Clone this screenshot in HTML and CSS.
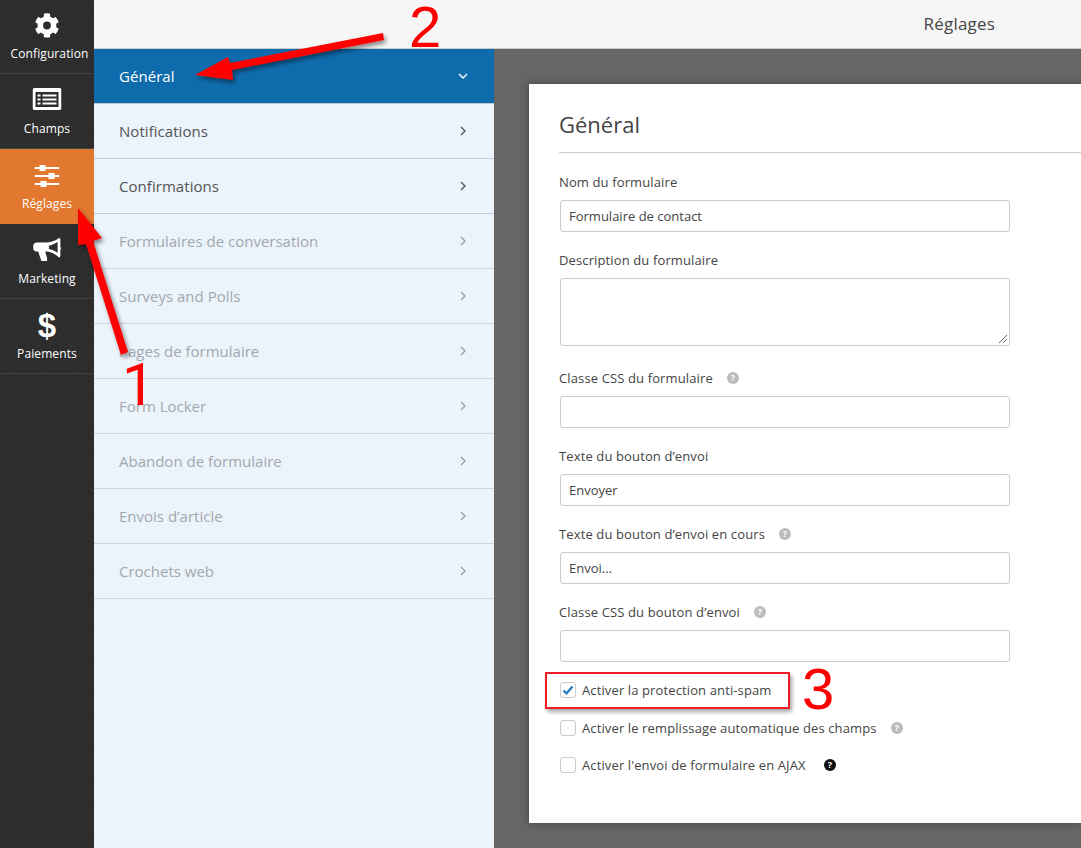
FILE: index.html
```html
<!DOCTYPE html>
<html lang="fr">
<head>
<meta charset="utf-8">
<title>Réglages</title>
<link rel="stylesheet" href="styles.css">
</head>
<body>
<div class="app">
  <nav class="rail">
    <a class="rail-item rail-item-first">
      <svg class="rail-icon" viewBox="0 0 512 512" width="25" height="25"><path fill="#fff" d="M487 315l-43-25c4-23 4-46 0-69l43-25c5-3 7-9 6-14-11-36-30-68-55-95-4-4-10-5-15-2l-43 25c-18-15-39-27-60-35V25c0-6-4-11-10-12-37-8-75-8-110 0-6 1-10 6-10 12v50c-22 8-42 20-60 35L87 85c-5-3-11-2-15 2-25 27-44 59-55 95-2 6 1 11 6 14l43 25c-4 23-4 46 0 69l-43 25c-5 3-7 9-6 14 11 36 30 68 55 95 4 4 10 5 15 2l43-25c18 15 39 27 60 35v50c0 6 4 11 10 12 37 8 75 8 110 0 6-1 10-6 10-12v-50c22-8 42-20 60-35l43 25c5 3 11 2 15-2 25-27 44-59 55-95 1-6-1-11-6-14zM256 336a80 80 0 1 1 0-160 80 80 0 0 1 0 160z"/></svg>
      <span>Configuration</span>
    </a>
    <a class="rail-item">
      <svg class="rail-icon" viewBox="0 0 29 22" width="29" height="22"><path fill="#fff" fill-rule="evenodd" d="M2 0h25a2 2 0 0 1 2 2v18a2 2 0 0 1-2 2H2a2 2 0 0 1-2-2V2a2 2 0 0 1 2-2zm1 4v15h23V4z"/><path fill="#fff" d="M5 6.500h3v2H5zM10 6.500h14v2H10zM5 10.500h3v2H5zM10 10.500h14v2H10zM5 14.500h3v2H5zM10 14.500h14v2H10z"/></svg>
      <span>Champs</span>
    </a>
    <a class="rail-item rail-item-active">
      <svg class="rail-icon" viewBox="0 0 25 22" width="25" height="22"><path fill="#fff" d="M0 2h25v2H0zM0 10h25v2H0zM0 18h25v2H0z"/><path fill="#fff" d="M5 0h6v6H5zM14 8h6v6h-6zM6 16h6v6H6z"/></svg>
      <span>Réglages</span>
    </a>
    <a class="rail-item">
      <svg class="rail-icon" viewBox="0 0 30 26" width="29" height="24"><path fill="#fff" fill-rule="evenodd" d="M28 0c1 0 1.500 1 1.500 2v7.500c.4.500.5 1 .5 1.500s-.1 1-.5 1.500V19c0 1-.6 2-1.500 2-4-3.500-9-6-13-6.300h-2l1.800 6c.4 1.500.5 3 .1 4.300H9c-.5-1.300-2.200-6-3.500-10.300H4c-2.200 0-4-1.800-4-4V9c0-2.200 1.800-4 4-4h10c5 0 10-2 14-5zm-1.500 4.300C23.500 6.300 20 7.800 17 8.300v3.600c3 .5 6.500 2 9.500 4z"/></svg>
      <span>Marketing</span>
    </a>
    <a class="rail-item">
      <span class="rail-dollar">$</span>
      <span>Paiements</span>
    </a>
  </nav>
  <div class="main">
    <header class="topbar"><span class="topbar-title">Réglages</span></header>
    <div class="work">
      <ul class="sections">
        <li class="section section-active"><span>Général</span><svg class="chev" viewBox="0 0 10 10" width="10" height="10"><path d="M1 3l4 4 4-4" /></svg></li>
        <li class="section"><span>Notifications</span><svg class="chev" viewBox="0 0 10 10" width="10" height="10"><path d="M3 1l4 4-4 4" /></svg></li>
        <li class="section"><span>Confirmations</span><svg class="chev" viewBox="0 0 10 10" width="10" height="10"><path d="M3 1l4 4-4 4" /></svg></li>
        <li class="section section-muted"><span>Formulaires de conversation</span><svg class="chev" viewBox="0 0 10 10" width="10" height="10"><path d="M3 1l4 4-4 4" /></svg></li>
        <li class="section section-muted"><span>Surveys and Polls</span><svg class="chev" viewBox="0 0 10 10" width="10" height="10"><path d="M3 1l4 4-4 4" /></svg></li>
        <li class="section section-muted"><span>Pages de formulaire</span><svg class="chev" viewBox="0 0 10 10" width="10" height="10"><path d="M3 1l4 4-4 4" /></svg></li>
        <li class="section section-muted"><span>Form Locker</span><svg class="chev" viewBox="0 0 10 10" width="10" height="10"><path d="M3 1l4 4-4 4" /></svg></li>
        <li class="section section-muted"><span>Abandon de formulaire</span><svg class="chev" viewBox="0 0 10 10" width="10" height="10"><path d="M3 1l4 4-4 4" /></svg></li>
        <li class="section section-muted"><span>Envois d’article</span><svg class="chev" viewBox="0 0 10 10" width="10" height="10"><path d="M3 1l4 4-4 4" /></svg></li>
        <li class="section section-muted"><span>Crochets web</span><svg class="chev" viewBox="0 0 10 10" width="10" height="10"><path d="M3 1l4 4-4 4" /></svg></li>
      </ul>
      <div class="stage">
        <section class="card">
          <h2 class="card-title">Général</h2>
          <div class="field">
            <label class="label">Nom du formulaire</label>
            <div class="input">Formulaire de contact</div>
          </div>
          <div class="field field-tall">
            <label class="label">Description du formulaire</label>
            <div class="input textarea">
              <svg class="grip" viewBox="0 0 10 10" width="10" height="10"><path d="M9 1L1 9M9 5L5 9"/></svg>
            </div>
          </div>
          <div class="field">
            <label class="label">Classe CSS du formulaire <svg class="help" viewBox="0 0 12 12" width="12" height="12"><circle cx="6" cy="6" r="6"/><text x="6" y="9.300" text-anchor="middle">?</text></svg></label>
            <div class="input"></div>
          </div>
          <div class="field">
            <label class="label">Texte du bouton d’envoi</label>
            <div class="input">Envoyer</div>
          </div>
          <div class="field">
            <label class="label">Texte du bouton d’envoi en cours <svg class="help" viewBox="0 0 12 12" width="12" height="12"><circle cx="6" cy="6" r="6"/><text x="6" y="9.300" text-anchor="middle">?</text></svg></label>
            <div class="input">Envoi...</div>
          </div>
          <div class="field">
            <label class="label">Classe CSS du bouton d’envoi <svg class="help" viewBox="0 0 12 12" width="12" height="12"><circle cx="6" cy="6" r="6"/><text x="6" y="9.300" text-anchor="middle">?</text></svg></label>
            <div class="input"></div>
          </div>
          <div class="checks">
            <div class="check">
              <span class="box"><svg viewBox="0 0 12 12" width="12" height="12"><path class="tick" d="M1.500 6.500l3 3 6-7"/></svg></span>
              <span>Activer la protection anti-spam</span>
            </div>
            <div class="check">
              <span class="box"></span>
              <span>Activer le remplissage automatique des champs</span>
              <svg class="help" viewBox="0 0 12 12" width="12" height="12"><circle cx="6" cy="6" r="6"/><text x="6" y="9.300" text-anchor="middle">?</text></svg>
            </div>
            <div class="check">
              <span class="box"></span>
              <span>Activer l'envoi de formulaire en AJAX</span>
              <svg class="help help-dark" viewBox="0 0 12 12" width="12" height="12"><circle cx="6" cy="6" r="6"/><text x="6" y="9.300" text-anchor="middle">?</text></svg>
            </div>
          </div>
        </section>
      </div>
    </div>
  </div>
</div>

<div class="annot-box"></div>
<svg class="annot-arrows" viewBox="0 0 1081 848" width="1081" height="848">
  <defs>
    <filter id="shade" x="-20%" y="-20%" width="140%" height="140%"><feDropShadow dx="2" dy="3" stdDeviation="2" flood-color="#000" flood-opacity=".45"/></filter>
  </defs>
  <path class="arrow" filter="url(#shade)" d="M383 33L230 63l-2-6-33 18 38 5-1-10 152-30z"/>
  <path class="arrow" filter="url(#shade)" d="M78 208l24 30-9 3 35 111-7 3-35-111-8 1z"/>
</svg>
<span class="num num-1">1</span>
<span class="num num-2">2</span>
<span class="num num-3">3</span>
</body>
</html>
```

FILE: styles.css
```css
* { box-sizing: border-box; }
html, body { margin: 0; height: 848px; overflow: hidden; }
body { font-family: "Open Sans", "Liberation Sans", sans-serif; color: #444; position: relative; }

.app { display: flex; height: 848px; width: 1081px; overflow: hidden; }

.rail {
  width: 94px; flex: none; background-color: #2d2d2d;
  background-image: radial-gradient(#444 .6px, transparent .8px);
  background-size: 11px 11px;
}
.rail-item {
  height: 75px; display: flex; flex-direction: column; align-items: center; justify-content: flex-end;
  padding-bottom: 11px; color: #fff; font-size: 12px; letter-spacing: .1px; line-height: 17px;
  border-bottom: 1px solid #434343; position: relative;
}
.rail-item-first { height: 74px; }
.rail-item-first span { margin-left: 5px; }
.rail-icon { position: absolute; top: 14px; left: 50%; transform: translateX(-50%); }
.rail-item-first .rail-icon { top: 13px; }
.rail-item-active { background: #e27730; border-bottom-color: #e27730; }
.rail-item-active .rail-icon { top: 16px; }
.rail-dollar { position: absolute; top: 5px; left: 0; right: 0; text-align: center; font-size: 33px; line-height: 44px; font-weight: 700; font-family: "Liberation Sans", sans-serif; }

.main { flex: 1; min-width: 0; display: flex; flex-direction: column; }
.topbar {
  height: 49px; flex: none; background: #f6f6f6; border-bottom: 1px solid #ccc;
  display: flex; align-items: center; justify-content: flex-end; padding: 0 86px 0 0;
}
.topbar-title { font-size: 17px; letter-spacing: .2px; color: #444; line-height: 48px; }

.work { flex: 1; display: flex; min-height: 0; }
.sections { width: 400px; flex: none; margin: 0; padding: 0; list-style: none; background: #ebf3fb; }
.section {
  height: 55px; padding: 0 26px 0 25px; display: flex; align-items: center; justify-content: space-between;
  font-size: 15px; letter-spacing: .05px; color: #555; border-bottom: 1px solid #c3ccd6;
}
.section-active { background: #0e6cad; color: #fff; border-bottom-color: #b9c9d8; }
.section-muted { color: #a3a8ad; border-bottom-color: #ced6de; letter-spacing: 0; }
.chev { fill: none; stroke: #555; stroke-width: 1.400; }
.section-active .chev { stroke: #fff; }
.section-muted .chev { stroke: #9a9fa5; }

.stage { flex: 1; min-width: 0; background: #666; padding: 35px 0 25px 35px; }
.card { background: #fff; height: 739px; padding: 25px 0 0 30px; box-shadow: 0 0 8px rgba(0,0,0,.35); }
.card-title { margin: 0 0 19px; font-size: 22px; font-weight: 400; line-height: 30px; color: #444; padding-bottom: 13px; border-bottom: 1px solid #ccc; }

.field { width: 451px; margin-bottom: 18px; }
.field-tall { margin-bottom: 22px; }
.label { display: flex; align-items: center; gap: 8px; height: 20px; margin-bottom: 8px; font-size: 13px; letter-spacing: .125px; line-height: 20px; color: #444; }
.label .help { margin-left: 6px; }
.input {
  height: 32px; margin-left: 1px; background: #fff; border: 1px solid #ccc; border-radius: 3px; padding: 0 8px;
  font-size: 13px; line-height: 30px; color: #444;
}
.textarea { height: 68px; position: relative; }
.grip { position: absolute; right: 1px; bottom: 1px; fill: none; stroke: #666; stroke-width: 1; }

.help circle { fill: #bbb; }
.help text { fill: #fff; font: 700 9px "Open Sans", sans-serif; }
.help-dark circle { fill: #111; }

.checks { margin: 17px 0 0 1px; }
.check { display: flex; align-items: center; height: 20px; margin-bottom: 18px; font-size: 13px; letter-spacing: .12px; color: #444; }
.check:nth-child(2) { margin-bottom: 17px; }
.box {
  width: 16px; height: 16px; flex: none; margin-right: 6px; border: 1px solid #ccc; border-radius: 3px; background: #fff;
  display: flex; align-items: center; justify-content: center;
}
.tick { fill: none; stroke: #1e79c0; stroke-width: 2.200; }
.check .help { margin-left: 14px; }
.check .help-dark { margin-left: 18px; }

.annot-box { position: absolute; left: 545px; top: 672px; width: 245px; height: 37px; border: 2px solid #ee1c25; box-shadow: 2px 3px 4px rgba(0,0,0,.35); }
.annot-arrows { position: absolute; left: 0; top: 0; pointer-events: none; }
.arrow { fill: #f00; }
.num { position: absolute; color: #f00; font-family: "Liberation Sans", sans-serif; font-size: 58px; line-height: 44px; }
.num-1 { font-family: Roboto, sans-serif; font-size: 59px; left: 122px; top: 363px; }
.num-2 { left: 409px; top: 5px; }
.num-3 { left: 802px; top: 667px; }
```
